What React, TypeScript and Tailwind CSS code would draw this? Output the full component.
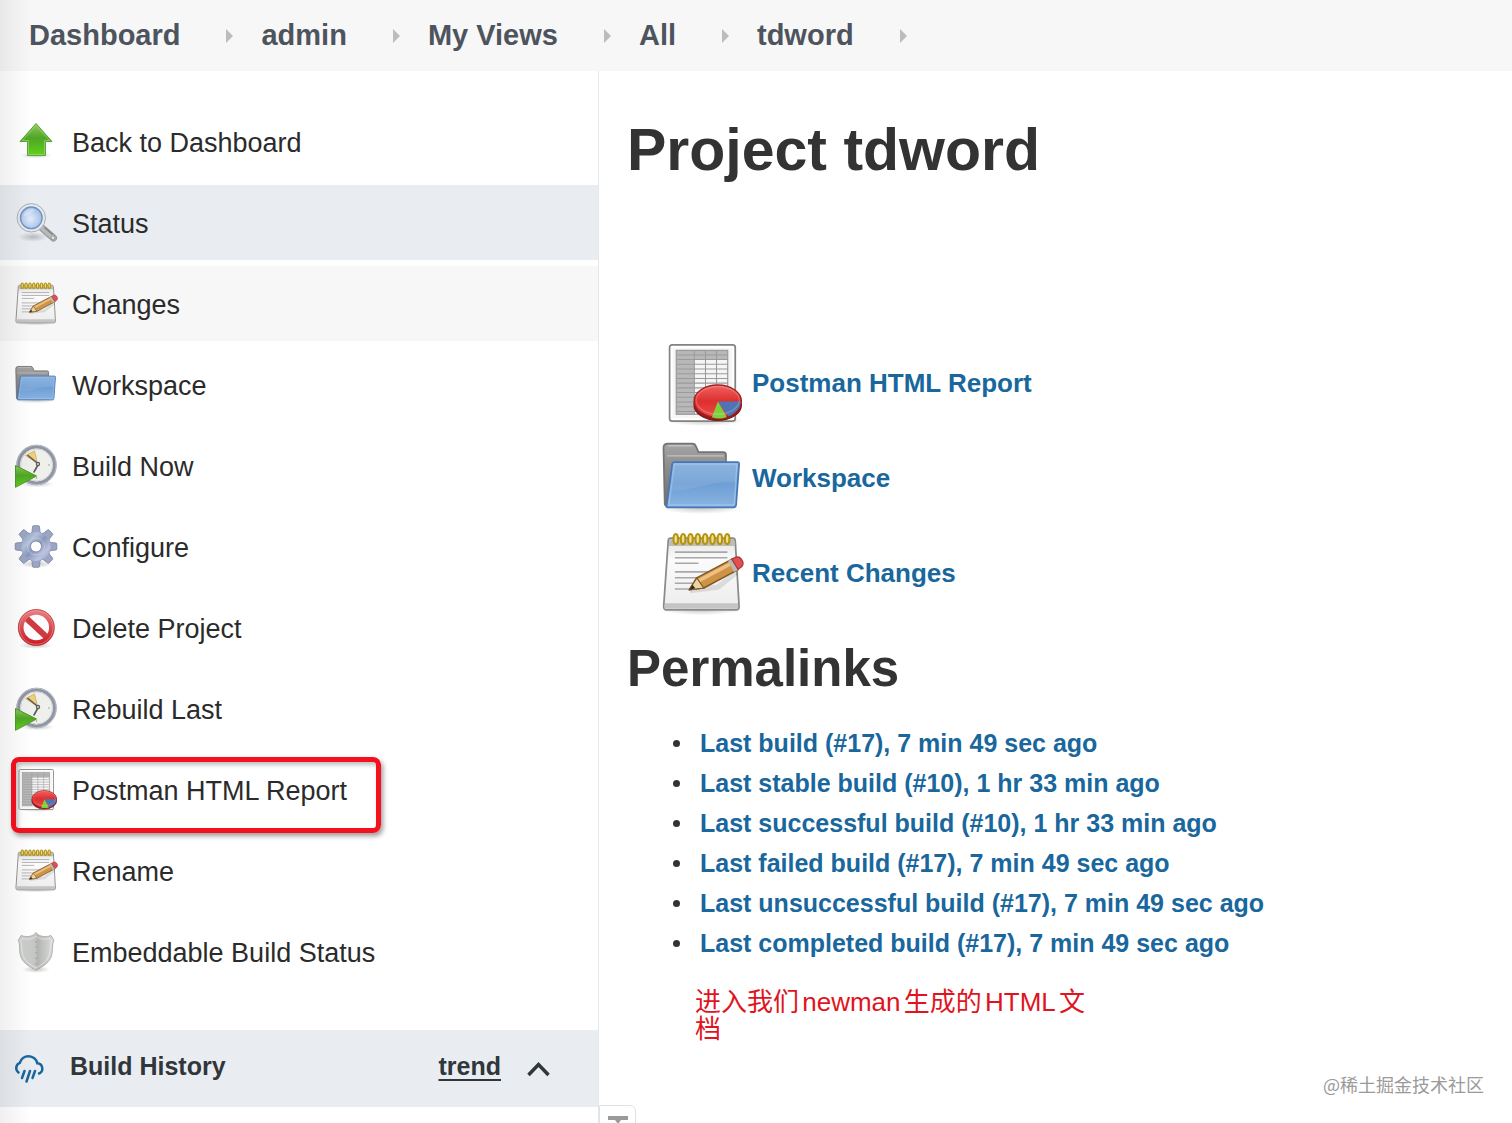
import React from "react";

function SharedGradients() {
  return (
    <svg className="absolute size-0" aria-hidden="true">
      <defs>
        <linearGradient id="green" x1="0" y1="0" x2="0" y2="1">
          <stop offset="0" stopColor="#8ecb5c" />
          <stop offset="0.45" stopColor="#4fa626" />
          <stop offset="1" stopColor="#62cf1c" />
        </linearGradient>
        <linearGradient id="paper" x1="0" y1="0" x2="0" y2="1">
          <stop offset="0" stopColor="#e2e2e2" />
          <stop offset="0.3" stopColor="#fbfbfb" />
          <stop offset="1" stopColor="#ececec" />
        </linearGradient>
        <linearGradient id="folderBack" x1="0" y1="0" x2="0" y2="1">
          <stop offset="0" stopColor="#a5a5a5" />
          <stop offset="0.4" stopColor="#8b8b8b" />
          <stop offset="1" stopColor="#6f6f6f" />
        </linearGradient>
        <linearGradient id="folderFront" x1="0" y1="0" x2="0" y2="1">
          <stop offset="0" stopColor="#82aede" />
          <stop offset="0.5" stopColor="#6f9fd5" />
          <stop offset="1" stopColor="#8ab4e2" />
        </linearGradient>
        <linearGradient id="redPie" x1="0" y1="0" x2="0" y2="1">
          <stop offset="0" stopColor="#f0625f" />
          <stop offset="0.5" stopColor="#dd2f2f" />
          <stop offset="1" stopColor="#ee4a48" />
        </linearGradient>
        <linearGradient id="redRing" x1="0" y1="0" x2="0" y2="1">
          <stop offset="0" stopColor="#e67a7c" />
          <stop offset="1" stopColor="#cc1f26" />
        </linearGradient>
        <radialGradient id="lens" cx="0.45" cy="0.55" r="0.6">
          <stop offset="0" stopColor="#e3eefb" />
          <stop offset="1" stopColor="#9dbbe6" />
        </radialGradient>
        <linearGradient id="gear" x1="0" y1="0" x2="1" y2="1">
          <stop offset="0" stopColor="#8795b4" />
          <stop offset="0.3" stopColor="#b3c1da" />
          <stop offset="0.5" stopColor="#8a97bb" />
          <stop offset="0.75" stopColor="#b9c2de" />
          <stop offset="1" stopColor="#9299bb" />
        </linearGradient>
        <linearGradient id="shield" x1="0" y1="0" x2="1" y2="0">
          <stop offset="0" stopColor="#d0d2cf" />
          <stop offset="0.5" stopColor="#c3c5c2" />
          <stop offset="0.52" stopColor="#b1b3b0" />
          <stop offset="1" stopColor="#dddedc" />
        </linearGradient>
        <radialGradient id="shade">
          <stop offset="0" stopColor="#000" stopOpacity="0.22" />
          <stop offset="1" stopColor="#000" stopOpacity="0" />
        </radialGradient>
      </defs>
    </svg>
  );
}

type IconProps = { className: string };

function UpArrowIcon({ className }: IconProps) {
  return (
    <svg viewBox="0 0 44 44" className={className} aria-hidden="true">
      <ellipse cx="22" cy="35.5" rx="16" ry="3" fill="url(#shade)" />
      <path d="M22 3.5 38 21.5H31.5V35.5H13.5V21.5H6Z" fill="url(#green)" stroke="#5da33a" strokeLinejoin="round" />
      <path d="M22 5.5 35.5 20.5H30.5V34.5H14.5V20.5H8.5Z" fill="none" stroke="#a3dd7c" strokeOpacity="0.6" />
    </svg>
  );
}

function MagnifierIcon({ className }: IconProps) {
  return (
    <svg viewBox="0 0 44 44" className={className} aria-hidden="true">
      <ellipse cx="19" cy="36" rx="15" ry="5" fill="url(#shade)" />
      <path d="M27.5 26.5 39.5 37" stroke="#9a9c9d" strokeWidth="7" strokeLinecap="round" />
      <path d="M28 27 39.5 37" stroke="#b9bbbb" strokeWidth="4.5" strokeLinecap="round" />
      <path d="m30.5 26.5 8 7" stroke="#838586" strokeWidth="1.5" />
      <circle cx="39" cy="36.7" r="1.8" fill="#eceeee" stroke="#8b8d8e" strokeWidth="0.8" />
      <circle cx="17.3" cy="16.8" r="14.2" fill="#e6eaed" stroke="#a9afb5" />
      <circle cx="17.3" cy="16.8" r="10.8" fill="url(#lens)" stroke="#7392c4" strokeWidth="1.4" />
      <path d="M9.5 15a8 8 0 0 1 11-6.5c-2 4-6 6.5-11 6.5Z" fill="#fff" fillOpacity="0.3" />
    </svg>
  );
}

function NotepadIcon({ className }: IconProps) {
  const coils = [9, 13.2, 17.4, 21.6, 25.8, 30, 34.2, 38.4];
  return (
    <svg viewBox="0 0 48 48" className={className} aria-hidden="true">
      <ellipse cx="23.5" cy="44.5" rx="23" ry="3" fill="url(#shade)" />
      <path d="M6.2 3.5H41.5Q42.9 3.5 43 5L45.2 42.5Q45.2 44.5 43.5 44.5H3.8Q2 44.5 2.1 42.5L4.7 5Q4.8 3.5 6.2 3.5Z" fill="url(#paper)" stroke="#8a8a86" />
      <path d="M5.3 4.2H42.3L42.7 8H5Z" fill="#bdbdb6" />
      <path d="M2.8 40.7H44.6L44.5 43.8H2.7Z" fill="#c4c4c2" />
      <path
        d="M8.5 11.5H38.5M8.5 14.7H38.5M8.5 17.9H22M8.5 22.8H36M8.5 26.1H30M8.5 29.3H24M8.5 32.6H18"
        stroke="#a8a8a8"
        strokeWidth="0.9"
      />
      {coils.map((x) => (
        <ellipse key={x} cx={x} cy="4" rx="1.3" ry="2.9" fill="#f1e08a" stroke="#b5920f" strokeWidth="1.2" />
      ))}
      <path d="M17 33.5 33 31.5 44 23" stroke="#000" strokeOpacity="0.1" strokeWidth="3" fill="none" />
      <path d="m16.8 33 4.2-6.8 20.2-10.7 3.5 6L25 32Z" fill="#cf9347" stroke="#805a24" strokeWidth="0.9" strokeLinejoin="round" />
      <path d="m21.5 27 19.7-10.5 1 1.8-19.5 10.4Z" fill="#eec183" />
      <path d="m16.8 33 4.2-6.8 4 5.8Z" fill="#ead3a5" stroke="#805a24" strokeWidth="0.7" />
      <path d="m16.8 33 1.7-2.8 1.7 2Z" fill="#2e2a22" />
      <path d="m38.8 16.6 2.3-1.2 3.6 6.1-2.3 1.3Z" fill="#b9b9b5" />
      <path d="m41 15.5 2.6-1.2c2.4-.8 5 3.2 3.2 5.4l-2.2 1.7Z" fill="#e05050" stroke="#a93333" strokeWidth="0.7" />
    </svg>
  );
}

function FolderIcon({ className }: IconProps) {
  return (
    <svg viewBox="0 0 48 48" className={className} aria-hidden="true">
      <ellipse cx="23.5" cy="40.5" rx="23.5" ry="3.5" fill="url(#shade)" />
      <path d="M4.5 3.8H18.5Q20 3.8 20.5 5.2L22 8.6H36.2Q37.7 8.6 37.7 10.2V39.5H4Q2.8 39.5 2.7 38L2 6.2Q2 3.8 4.5 3.8Z" fill="url(#folderBack)" stroke="#747474" />
      <path d="M4 10.8H36.5M4.5 5H18.5" stroke="#c2c2c2" strokeWidth="0.8" />
      <path d="M8.2 14.3H44.2Q45.3 14.3 45.2 15.5L43.5 38.6Q43.3 40.2 41.8 40.2H4.3Q3.5 40.2 3.8 39L7 15.4Q7.2 14.3 8.2 14.3Z" fill="url(#folderFront)" stroke="#4678b5" />
      <path d="M8.2 15.4H44L42.5 38.9H5Z" fill="none" stroke="#b6d2f0" strokeOpacity="0.5" strokeWidth="0.9" />
      <path d="M8.2 15.5H44L43 26C30 24.5 20 31 6.5 30.5Z" fill="#fff" fillOpacity="0.08" />
    </svg>
  );
}

function ClockRunIcon({ className }: IconProps) {
  return (
    <svg viewBox="0 0 44 44" className={className} aria-hidden="true">
      <ellipse cx="23" cy="40" rx="17" ry="3.5" fill="url(#shade)" />
      <circle cx="22.5" cy="21" r="18.3" fill="#efefec" stroke="#9095a3" strokeWidth="3.8" />
      <circle cx="22.5" cy="21" r="19.7" fill="none" stroke="#bfc2cc" strokeWidth="0.9" />
      <circle cx="22.5" cy="21" r="16" fill="none" stroke="#d4d5d9" />
      <path d="M11.5 11.5 20.5 7 23.5 19.5Z" fill="#ecd07c" stroke="#c9a94f" strokeWidth="0.7" />
      <path d="M14 11.5 24.5 20M24.5 20 20 28" stroke="#5a5a5a" strokeWidth="1.6" strokeLinecap="round" />
      <circle cx="24" cy="20" r="2.2" fill="#5a5a5a" />
      <circle cx="24" cy="20" r="0.9" fill="#e6e6e6" />
      <circle cx="35" cy="21" r="0.8" fill="#999" />
      <circle cx="22.5" cy="34" r="0.8" fill="#999" />
      <path d="M1.5 21.5 22.5 32 1.5 43.3Z" fill="url(#green)" stroke="#4c9a28" strokeLinejoin="round" />
    </svg>
  );
}

function GearIcon({ className }: IconProps) {
  const teeth = [0, 45, 90, 135, 180, 225, 270, 315];
  return (
    <svg viewBox="0 0 44 44" className={className} aria-hidden="true">
      <ellipse cx="22" cy="39" rx="17" ry="4" fill="url(#shade)" />
      {teeth.map((angle) => (
        <path
          key={angle}
          d="M16 9.5 18 6.5 18.5 1.5Q18.6 .7 19.5 .7H24.5Q25.4 .7 25.5 1.5L26 6.5 28 9.5Z"
          fill="#9ba6c4"
          stroke="#7a84a5"
          strokeWidth="0.8"
          transform={`rotate(${angle} 22 21.5)`}
        />
      ))}
      <circle cx="22" cy="21.5" r="14.5" fill="url(#gear)" />
      <circle cx="22" cy="21.5" r="8.5" fill="none" stroke="#cbd2e6" strokeOpacity="0.6" />
      <circle cx="22" cy="21.5" r="5.5" fill="#fff" stroke="#818bab" />
    </svg>
  );
}

function ForbiddenIcon({ className }: IconProps) {
  return (
    <svg viewBox="0 0 44 44" className={className} aria-hidden="true">
      <ellipse cx="22" cy="39.5" rx="17" ry="3.5" fill="url(#shade)" />
      <circle cx="22.3" cy="21.5" r="15.3" fill="#fdfdfd" />
      <path d="M11.5 11.5 33 31.5" stroke="#cf3a40" strokeWidth="6" />
      <circle cx="22.3" cy="21.5" r="15.5" fill="none" stroke="url(#redRing)" strokeWidth="5.5" />
      <circle cx="22.3" cy="21.5" r="18" fill="none" stroke="#b93a3f" strokeWidth="0.7" />
      <circle cx="22.3" cy="21.5" r="16.8" fill="none" stroke="#f0a4a5" strokeOpacity="0.6" strokeWidth="0.9" />
    </svg>
  );
}

function ReportIcon({ className }: IconProps) {
  return (
    <svg viewBox="0 0 48 48" className={className} aria-hidden="true">
      <ellipse cx="26" cy="45" rx="22" ry="3" fill="url(#shade)" />
      <rect x="5.5" y="1.7" width="37.5" height="43.5" rx="1.5" fill="#f6f6f6" stroke="#83837f" />
      <rect x="6.7" y="2.9" width="35.1" height="41.1" fill="none" stroke="#fff" />
      <rect x="9.3" y="4.8" width="29.4" height="36.5" fill="#f5f5f5" />
      <path d="M9.3 4.8H38.7V10H19.6V41.3H9.3Z" fill="#b8b8b8" />
      <path
        d="M9.3 7.4H38.7M9.3 10H38.7M9.3 12.7H38.7M9.3 15.4H38.7M9.3 18.1H38.7M9.3 20.8H38.7M9.3 23.5H38.7M9.3 26.2H38.7M9.3 28.9H38.7M9.3 31.6H38.7M9.3 34.3H38.7M9.3 37H38.7M9.3 39.7H38.7M19.6 4.8V41.3M26 4.8V41.3M32.3 4.8V41.3"
        stroke="#9a9a9a"
        strokeWidth="0.6"
      />
      <rect x="9.3" y="4.8" width="29.4" height="36.5" fill="none" stroke="#9a9a9a" strokeWidth="0.7" />
      <ellipse cx="33" cy="35.8" rx="13.5" ry="9" fill="#a01818" stroke="#7b1a1a" strokeWidth="0.8" />
      <ellipse cx="33" cy="33.8" rx="13.5" ry="9.2" fill="url(#redPie)" stroke="#a32020" strokeWidth="0.8" />
      <path d="M33.1 34H46.2C46 38 43 41 39 42.5Z" fill="#4f74b4" />
      <path d="M33.1 34 38.2 43C35 44 32.5 44 29.6 43Z" fill="#7fd13b" />
      <ellipse cx="33" cy="33.3" rx="12.3" ry="7.9" fill="none" stroke="#fff" strokeOpacity="0.2" strokeWidth="0.8" />
    </svg>
  );
}

function ShieldIcon({ className }: IconProps) {
  return (
    <svg viewBox="0 0 44 44" className={className} aria-hidden="true">
      <ellipse cx="22" cy="39.5" rx="14" ry="3.5" fill="url(#shade)" />
      <path d="M22 2.5C24 6 31 8 37 5.5L40 10.5C37.5 14 39.5 20 37 27C34.5 33.5 28 37 22 40.5C16 37 9.5 33.5 7 27C4.5 20 6.5 14 4.3 10.5L7 5.5C13 8 20 6 22 2.5Z" fill="url(#shield)" stroke="#b2b4b1" />
      <path d="M22 6C25 9 31 10 36 8.5L37.5 11C35.5 15 37 20 35 26C32.5 32 27 35 22 38C17 35 11.5 32 9 26C7 20 8.5 15 6.5 11L8 8.5C13 10 19 9 22 6Z" fill="none" stroke="#f1f1f0" strokeOpacity="0.7" strokeWidth="0.9" />
      <path d="M22 11V36" stroke="#a5a7a4" strokeWidth="1.5" strokeDasharray="1.5 4" />
    </svg>
  );
}

function RainIcon({ className }: IconProps) {
  return (
    <svg viewBox="0 0 32 30" className={className} fill="none" stroke="#19679c" strokeWidth="2.5" strokeLinecap="round" aria-hidden="true">
      <path d="M5.5 18.5A5.6 5.6 0 0 1 6.8 8.8 9 9 0 0 1 24.3 9.3 5.3 5.3 0 0 1 26 19.5" />
      <path d="m11.5 17-2.5 7M17 17l-3.5 10.5M22 17l-2.5 7" />
    </svg>
  );
}

const crumbs = ["Dashboard", "admin", "My Views", "All", "tdword"];

type Task = {
  label: string;
  Icon: (props: IconProps) => React.ReactElement;
  state?: "active" | "hover" | "marked";
};

const tasks: Task[] = [
  { label: "Back to Dashboard", Icon: UpArrowIcon },
  { label: "Status", Icon: MagnifierIcon, state: "active" },
  { label: "Changes", Icon: NotepadIcon, state: "hover" },
  { label: "Workspace", Icon: FolderIcon },
  { label: "Build Now", Icon: ClockRunIcon },
  { label: "Configure", Icon: GearIcon },
  { label: "Delete Project", Icon: ForbiddenIcon },
  { label: "Rebuild Last", Icon: ClockRunIcon },
  { label: "Postman HTML Report", Icon: ReportIcon, state: "marked" },
  { label: "Rename", Icon: NotepadIcon },
  { label: "Embeddable Build Status", Icon: ShieldIcon },
];

const shortcuts = [
  { label: "Postman HTML Report", Icon: ReportIcon },
  { label: "Workspace", Icon: FolderIcon },
  { label: "Recent Changes", Icon: NotepadIcon },
];

const permalinks = [
  "Last build (#17), 7 min 49 sec ago",
  "Last stable build (#10), 1 hr 33 min ago",
  "Last successful build (#10), 1 hr 33 min ago",
  "Last failed build (#17), 7 min 49 sec ago",
  "Last unsuccessful build (#17), 7 min 49 sec ago",
  "Last completed build (#17), 7 min 49 sec ago",
];

const rowBackground = {
  active: "bg-[#e9edf1]",
  hover: "bg-[#f7f7f7]",
  marked: "",
  plain: "",
};

export default function App() {
  return (
    <div className="relative flex min-h-screen flex-col overflow-hidden bg-white font-['Liberation_Sans',Arial,sans-serif] text-[#333]">
      <SharedGradients />

      <nav aria-label="Breadcrumb" className="bg-[#f7f7f7]">
        <ol className="flex h-[71px] items-center pl-[29px] text-[29px] font-bold text-[#4d545d]">
          {crumbs.map((crumb) => (
            <li key={crumb} className="flex items-center">
              <a href="#">{crumb}</a>
              <svg viewBox="0 0 7 14" className="mr-7 ml-[46px] h-3.5 w-[7px]" aria-hidden="true">
                <path d="M0 0 7 7 0 14Z" fill="#bcbcbc" />
              </svg>
            </li>
          ))}
        </ol>
      </nav>

      <div className="flex grow">
        <aside className="w-[599px] shrink-0 border-r border-[#e4e8ea] pt-[33px]">
          <ul className="flex flex-col gap-1.5">
            {tasks.map(({ label, Icon, state }) => (
              <li key={label} className="relative">
                <a
                  href="#"
                  className={`flex h-[75px] items-center gap-3.5 pl-3.5 text-[27px] text-[#2b2b2b] ${rowBackground[state ?? "plain"]}`}
                >
                  <Icon className="size-11 shrink-0" />
                  <span className="pt-1">{label}</span>
                </a>
                {state === "marked" && (
                  <div className="pointer-events-none absolute top-[5px] left-[11px] h-[76px] w-[370px] rounded-lg border-[5px] border-[#f5101d] shadow-[2px_3px_5px_rgba(0,0,0,0.4),inset_2px_3px_4px_rgba(0,0,0,0.25)]" />
                )}
              </li>
            ))}
          </ul>

          <section className="mt-[41px] flex h-[77px] items-center bg-[#e9edf1] pr-12 pl-[13px] text-[25px] font-bold text-[#30363a]">
            <RainIcon className="h-[30px] w-8" />
            <h2 className="ml-[25px] grow pb-1">Build History</h2>
            <a href="#" className="pb-1 underline decoration-2 underline-offset-4">
              trend
            </a>
            <button type="button" aria-label="Collapse build history" className="ml-[26px]">
              <svg viewBox="0 0 23 16" className="h-4 w-[23px]" fill="none" stroke="#30363a" strokeWidth="3.5" aria-hidden="true">
                <path d="M1.5 14 11.5 3.5 21.5 14" />
              </svg>
            </button>
          </section>
        </aside>

        <main className="min-w-0 grow pt-[47px] pl-7">
          <h1 className="text-[59px] leading-[64px] font-bold">Project tdword</h1>

          <ul className="mt-[154px] pl-[33px] text-[26px] font-bold text-[#19679c]">
            {shortcuts.map(({ label, Icon }) => (
              <li key={label}>
                <a href="#" className="flex h-[95px] items-center gap-2">
                  <Icon className="size-[84px] shrink-0" />
                  <span>{label}</span>
                </a>
              </li>
            ))}
          </ul>

          <h2 className="mt-5 text-[51px] leading-[56px] font-bold">Permalinks</h2>

          <ul className="mt-[26px] pl-[46px] text-[25px] leading-10">
            {permalinks.map((text) => (
              <li key={text} className="flex items-center gap-5 before:size-[7px] before:rounded-full before:bg-[#333]">
                <a href="#" className="font-bold text-[#19679c]">
                  {text}
                </a>
              </li>
            ))}
          </ul>

          <p className="mt-[26px] ml-[68px] w-[410px] font-['Liberation_Sans','Noto_Sans_CJK_SC',sans-serif] text-[26px] leading-[27px] text-[#e0141e] [text-autospace:normal]">
            进入我们newman生成的HTML文<br />档
          </p>
        </main>
      </div>

      <div className="absolute top-[1105px] left-[599px] flex h-[38px] w-[37px] justify-center rounded-tr-md border border-[#dfe3e5] bg-white pt-2.5">
        <svg viewBox="0 0 20 20" className="size-5" aria-hidden="true">
          <path d="M0 0H20V4H13L10 8 7 4H0Z" fill="#9a9a9a" />
        </svg>
      </div>

      <div className="pointer-events-none absolute inset-y-0 left-0 w-8 bg-linear-to-r from-black/6 to-transparent" />

      <p className="absolute right-7 bottom-6 font-['Noto_Sans_CJK_SC',sans-serif] text-[18px] leading-[30px] text-[#9a9a9a]">
        @稀土掘金技术社区
      </p>
    </div>
  );
}
